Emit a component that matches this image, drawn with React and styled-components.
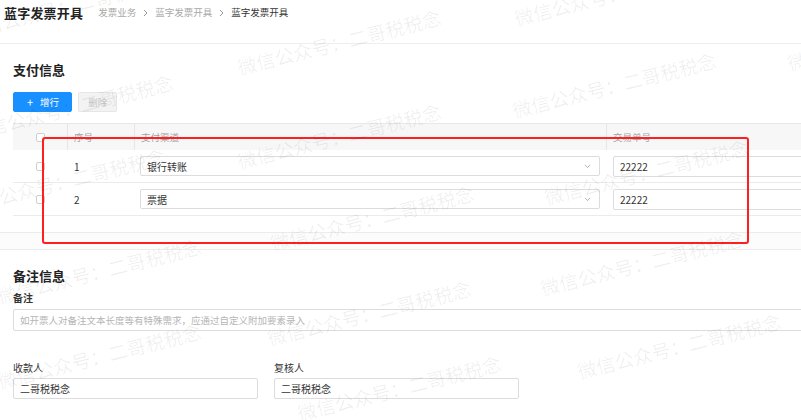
import styled, { createGlobalStyle } from "styled-components";

const GlobalStyle = createGlobalStyle`
   html, body { margin: 0; padding: 0; background: #fff; }
   * { box-sizing: border-box; }
`;

const FONT = `"Noto Sans CJK SC", "Noto Sans", "Liberation Sans", sans-serif`;

const rows = [
   { no: 1, channel: "银行转账", code: "22222" },
   { no: 2, channel: "票据", code: "22222" },
];

// watermark start points (bottom-left of the first glyph)
const marks = [
   [-33, 40], [517, 27], [240, 76], [790, 72], [515, 119],
   [-28, 141], [240, 170], [547, 206], [-36, 215], [273, 252],
   [543, 297], [0, 305], [270, 347], [580, 380], [0, 390], [300, 422],
];

const Chevron = () => (
   <svg width="7" height="5" viewBox="0 0 7 5">
      <path d="M1 0.8 L3.5 3.6 L6 0.8" fill="none" stroke="#aaa" strokeWidth="0.9" />
   </svg>
);

const Crumbs = () => (
   <Breadcrumb>
      <Crumb>发票业务</Crumb>
      <Arrow viewBox="0 0 5 8"><path d="M1 1 L4 4 L1 7" fill="none" stroke="#999" strokeWidth="1" /></Arrow>
      <Crumb>蓝字发票开具</Crumb>
      <Arrow viewBox="0 0 5 8"><path d="M1 1 L4 4 L1 7" fill="none" stroke="#999" strokeWidth="1" /></Arrow>
      <Crumb $current>蓝字发票开具</Crumb>
   </Breadcrumb>
);

const App = () => {
   return (
      <Page>
         <GlobalStyle />
         <Header>
            <PageTitle>蓝字发票开具</PageTitle>
            <Crumbs />
         </Header>

         {/* 支付信息 */}
         <Card>
            <SectionTitle>支付信息</SectionTitle>
            <Toolbar>
               <Button $primary><span className="plus">+</span>增行</Button>
               <Button disabled>删除</Button>
            </Toolbar>
            <Table>
               <HeadRow>
                  <HeadCell $center><Checkbox /></HeadCell>
                  <HeadCell>序号</HeadCell>
                  <HeadCell>支付渠道</HeadCell>
                  <HeadCell>交易单号</HeadCell>
               </HeadRow>
               {rows.map(r => (
                  <Row key={r.no}>
                     <Cell $center><Checkbox /></Cell>
                     <Cell>{r.no}</Cell>
                     <Cell $pad="6px">
                        <SelectBox>
                           <span>{r.channel}</span>
                           <Chevron />
                        </SelectBox>
                     </Cell>
                     <Cell>
                        <TextInput $w="200px">{r.code}</TextInput>
                     </Cell>
                  </Row>
               ))}
            </Table>
         </Card>
         <Gap />

         {/* 备注信息 */}
         <Card $last>
            <SectionTitle>备注信息</SectionTitle>
            <FieldLabel $strong $top="6px">备注</FieldLabel>
            <TextInput $w="calc(100% + 4px)" $h="22px" $placeholder $mt="4px">
               如开票人对备注文本长度等有特殊需求，应通过自定义附加要素录入
            </TextInput>
            <FieldGrid>
               <Field>
                  <FieldLabel>收款人</FieldLabel>
                  <TextInput $mt="3px">二哥税税念</TextInput>
               </Field>
               <Field>
                  <FieldLabel>复核人</FieldLabel>
                  <TextInput $mt="3px">二哥税税念</TextInput>
               </Field>
            </FieldGrid>
         </Card>

         <Highlight />
         {marks.map(([x, y], i) => (
            <Watermark key={i} style={{ left: x, top: y - 19 }}>微信公众号：二哥税税念</Watermark>
         ))}
      </Page>
   );
};

// style components
const Page = styled.div`
   position: relative;
   width: 801px;
   height: 420px;
   overflow: hidden;
   font-family: ${FONT};
   color: #333;
   background: #fff;
`;

const Header = styled.header`
   height: 44px;
   display: flex;
   align-items: center;
   align-self: flex-start;
   padding: 4px 0 22px 4px;
   border-bottom: 1px solid #eeeeee;
`;

const PageTitle = styled.h1`
   margin: 0;
   font-size: 13px;
   line-height: 17px;
   font-weight: 700;
   color: #222;
   letter-spacing: 0.2px;
`;

const Breadcrumb = styled.nav`
   display: flex;
   align-items: center;
   margin-left: 15px;
   gap: 6px;
`;

const Crumb = styled.span`
   font-size: 9.5px;
   line-height: 17px;
   color: ${p => (p.$current ? "#333" : "#a8a8a8")};
`;

const Arrow = styled.svg`
   width: 5px;
   height: 8px;
   margin: 0 1px;
`;

const Card = styled.section`
   padding: 17px 0 ${p => (p.$last ? "0" : "16px")} 13px;
   border-bottom: ${p => (p.$last ? "none" : "1px solid #ececec")};
   overflow: hidden;
`;

const Gap = styled.div`
   height: 17px;
   background: #fcfcfc;
   border-bottom: 1px solid #ececec;
`;

const SectionTitle = styled.h2`
   margin: 0;
   font-size: 13px;
   line-height: 18px;
   font-weight: 700;
   color: #222;
`;

const Toolbar = styled.div`
   display: flex;
   gap: 6px;
   margin-top: 13px;
`;

const Button = styled.button`
   height: 20px;
   padding: 0 ${p => (p.$primary ? "12px" : "9px")} 0 ${p => (p.$primary ? "13px" : "9px")};
   border-radius: 2px;
   font-family: ${FONT};
   font-size: 9.5px;
   display: flex;
   align-items: center;
   border: 1px solid ${p => (p.$primary ? "#1890ff" : "#e6e6e6")};
   background: ${p => (p.$primary ? "#1890ff" : "#f3f3f3")};
   color: ${p => (p.$primary ? "#fff" : "#c4c4c4")};

   .plus {
      font-size: 11px;
      margin-right: 7px;
      line-height: 1;
   }
`;

const Table = styled.div`
   margin-top: 11px;
   width: 793px;
   border-top: 1px solid #e8e8e8;
`;

const HeadRow = styled.div`
   display: grid;
   grid-template-columns: 54px 67px 472px 200px;
   height: 26px;
   background: #f7f7f8;
`;

const HeadCell = styled.div`
   display: flex;
   align-items: center;
   justify-content: ${p => (p.$center ? "center" : "flex-start")};
   padding-left: ${p => (p.$center ? "0" : "6px")};
   font-size: 9.5px;
   color: #a3a3a3;
   border-left: 1px solid #e6e6e6;

   &:first-child { border-left: none; }
`;

const Row = styled.div`
   display: grid;
   grid-template-columns: 54px 67px 472px 200px;
   height: 33px;
   border-bottom: 1px solid #ebebeb;
`;

const Cell = styled.div`
   display: flex;
   align-items: center;
   justify-content: ${p => (p.$center ? "center" : "flex-start")};
   padding: 0 ${p => p.$pad || "0"} 0 ${p => (p.$center ? "0" : p.$pad || "7px")};
   font-size: 10px;
   color: #333;
`;

const Checkbox = styled.span`
   width: 9px;
   height: 9px;
   border: 1px solid #cfcfcf;
   border-radius: 2px;
   background: #fff;
`;

const SelectBox = styled.div`
   flex: 1;
   height: 20px;
   display: flex;
   align-items: center;
   justify-content: space-between;
   padding: 0 8px 0 6px;
   border: 1px solid #dcdcdc;
   border-radius: 2px;
   font-size: 10px;
   color: #333;
`;

const TextInput = styled.div`
   width: ${p => p.$w || "245px"};
   height: ${p => p.$h || "21px"};
   margin-top: ${p => p.$mt || "0"};
   display: flex;
   align-items: center;
   padding-left: 6px;
   border: 1px solid #dcdcdc;
   border-radius: 2px;
   font-size: ${p => (p.$placeholder ? "9.5px" : "10px")};
   color: ${p => (p.$placeholder ? "#b5b5b5" : "#333")};
   white-space: nowrap;
`;

const FieldLabel = styled.div`
   margin-top: ${p => p.$top || "0"};
   font-size: 10px;
   line-height: 14px;
   font-weight: ${p => (p.$strong ? 700 : 400)};
   color: #333;
`;

const FieldGrid = styled.div`
   display: flex;
   gap: 16px;
   margin-top: 30px;
`;

const Field = styled.div`
   display: flex;
   flex-direction: column;
`;

const Highlight = styled.div`
   position: absolute;
   left: 42px;
   top: 137px;
   width: 707px;
   height: 107px;
   border: 2.5px solid #ff1f1f;
   border-radius: 3px;
   pointer-events: none;
`;

const Watermark = styled.div`
   position: absolute;
   font-size: 19px;
   line-height: 19px;
   white-space: nowrap;
   color: rgba(0, 0, 0, 0.065);
   transform: rotate(-14deg);
   transform-origin: 0 100%;
   pointer-events: none;
   font-family: ${FONT};
`;

export default App;
